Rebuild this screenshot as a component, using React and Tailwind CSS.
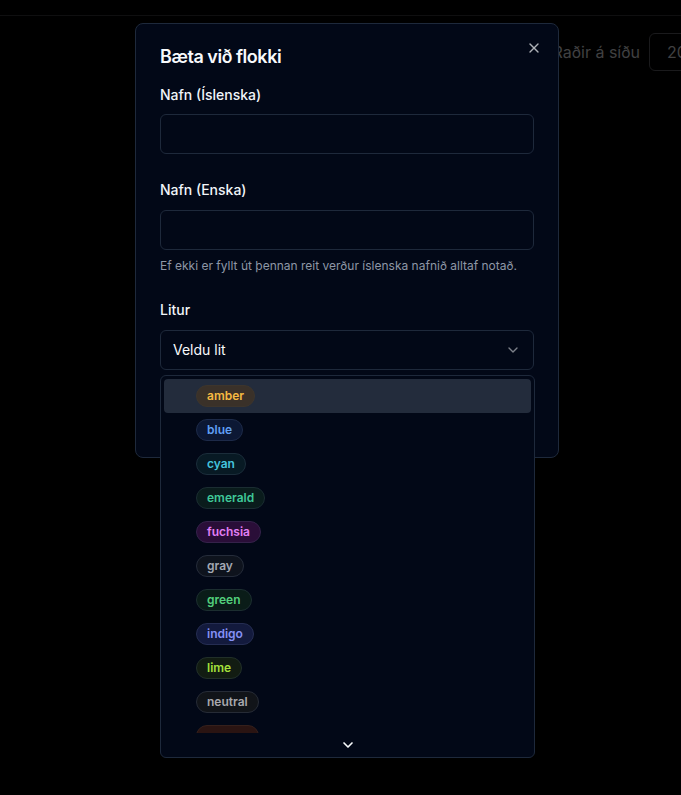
import React from "react";
import { X, ChevronDown } from "lucide-react";

const colors = [
  { name: "amber", cls: "text-[#f5b942] bg-[#3a3129] border-[#3d352c]" },
  { name: "blue", cls: "text-[#60a0f5] bg-[#0c1834] border-[#1d2a48]" },
  { name: "cyan", cls: "text-[#44c3de] bg-[#081a24] border-[#1b2d3a]" },
  { name: "emerald", cls: "text-[#3fc898] bg-[#0a1c1c] border-[#1b2d32]" },
  { name: "fuchsia", cls: "text-[#e27ff5] bg-[#2a0e38] border-[#35224a]" },
  { name: "gray", cls: "text-[#a3a8b3] bg-[#0e131d] border-[#252c3a]" },
  { name: "green", cls: "text-[#52d07d] bg-[#0a1c18] border-[#1c2e30]" },
  { name: "indigo", cls: "text-[#8591f5] bg-[#131a3d] border-[#252d52]" },
  { name: "lime", cls: "text-[#a5e03c] bg-[#121c12] border-[#212f29]" },
  { name: "neutral", cls: "text-[#a8a8ad] bg-[#111419] border-[#262b36]" },
  { name: "orange", cls: "text-[#fb923c] bg-[#2a1412] border-[#35201c]" },
];

export default function App() {
  return (
    <div
      className="relative w-full h-[795px] bg-black overflow-hidden"
      style={{ fontFamily: "Inter, 'Noto Sans', sans-serif" }}
    >
      {/* background page (dimmed by overlay) */}
      <div className="h-[16px] border-b border-[#0f0f10]" />
      <div className="flex justify-end items-center gap-[9px] pt-[17px]">
        <span className="text-base text-[#404042]">Raðir á síðu</span>
        <div className="w-[70px] h-[38px] -mr-[38px] rounded-md border border-[#1a1a1c] flex items-center pl-[17px] text-base text-[#404042]">
          20
        </div>
      </div>

      {/* dialog */}
      <div className="absolute left-[135px] top-[23px] w-[424px] rounded-lg border border-[#1e293b] bg-[#020817] p-6 text-[#f8fafc]">
        <h2 className="text-lg font-semibold leading-[18px] tracking-tight">Bæta við flokki</h2>
        <button className="absolute right-4 top-4 text-[#f8fafc] opacity-70">
          <X className="h-4 w-4" strokeWidth={2} />
        </button>

        <label className="block mt-[19px] text-sm font-medium leading-5 text-[#f1f5f9]">Nafn (Íslenska)</label>
        <div className="mt-[9px] h-10 rounded-md border border-[#1e293b] bg-[#020817]" />

        <label className="block mt-[26px] text-sm font-medium leading-5 text-[#f1f5f9]">Nafn (Enska)</label>
        <div className="mt-[10px] h-10 rounded-md border border-[#1e293b] bg-[#020817]" />
        <p className="mt-2 text-xs leading-4 text-[#8e97a6]">
          Ef ekki er fyllt út þennan reit verður íslenska nafnið alltaf notað.
        </p>

        <label className="block mt-[26px] text-sm font-medium leading-5 text-[#f1f5f9]">Litur</label>
        <div className="mt-[10px] h-10 rounded-md border border-[#1e293b] bg-[#020817] flex items-center justify-between px-3">
          <span className="text-sm text-[#f8fafc]">Veldu lit</span>
          <ChevronDown className="h-4 w-4 opacity-50" />
        </div>
        <div className="h-[63px]" />
      </div>

      {/* select dropdown */}
      <div className="absolute left-[160px] top-[375px] w-[375px] h-[383px] rounded-md border border-[#1e293b] bg-[#020817] flex flex-col overflow-hidden">
        <div className="flex-1 overflow-hidden px-[3px] pt-[3px]">
          {colors.map((c, i) => (
            <div
              key={c.name}
              className={`flex items-center h-[34px] pl-8 pr-2 rounded-sm ${i === 0 ? "bg-[#232c3c]" : ""}`}
            >
              <span
                className={`inline-flex items-center rounded-full border px-2.5 py-0.5 text-xs leading-4 font-semibold ${c.cls}`}
              >
                {c.name}
              </span>
            </div>
          ))}
        </div>
        <div className="h-6 flex items-center justify-center text-[#f8fafc]">
          <ChevronDown className="h-4 w-4" strokeWidth={2.5} />
        </div>
      </div>
    </div>
  );
}
